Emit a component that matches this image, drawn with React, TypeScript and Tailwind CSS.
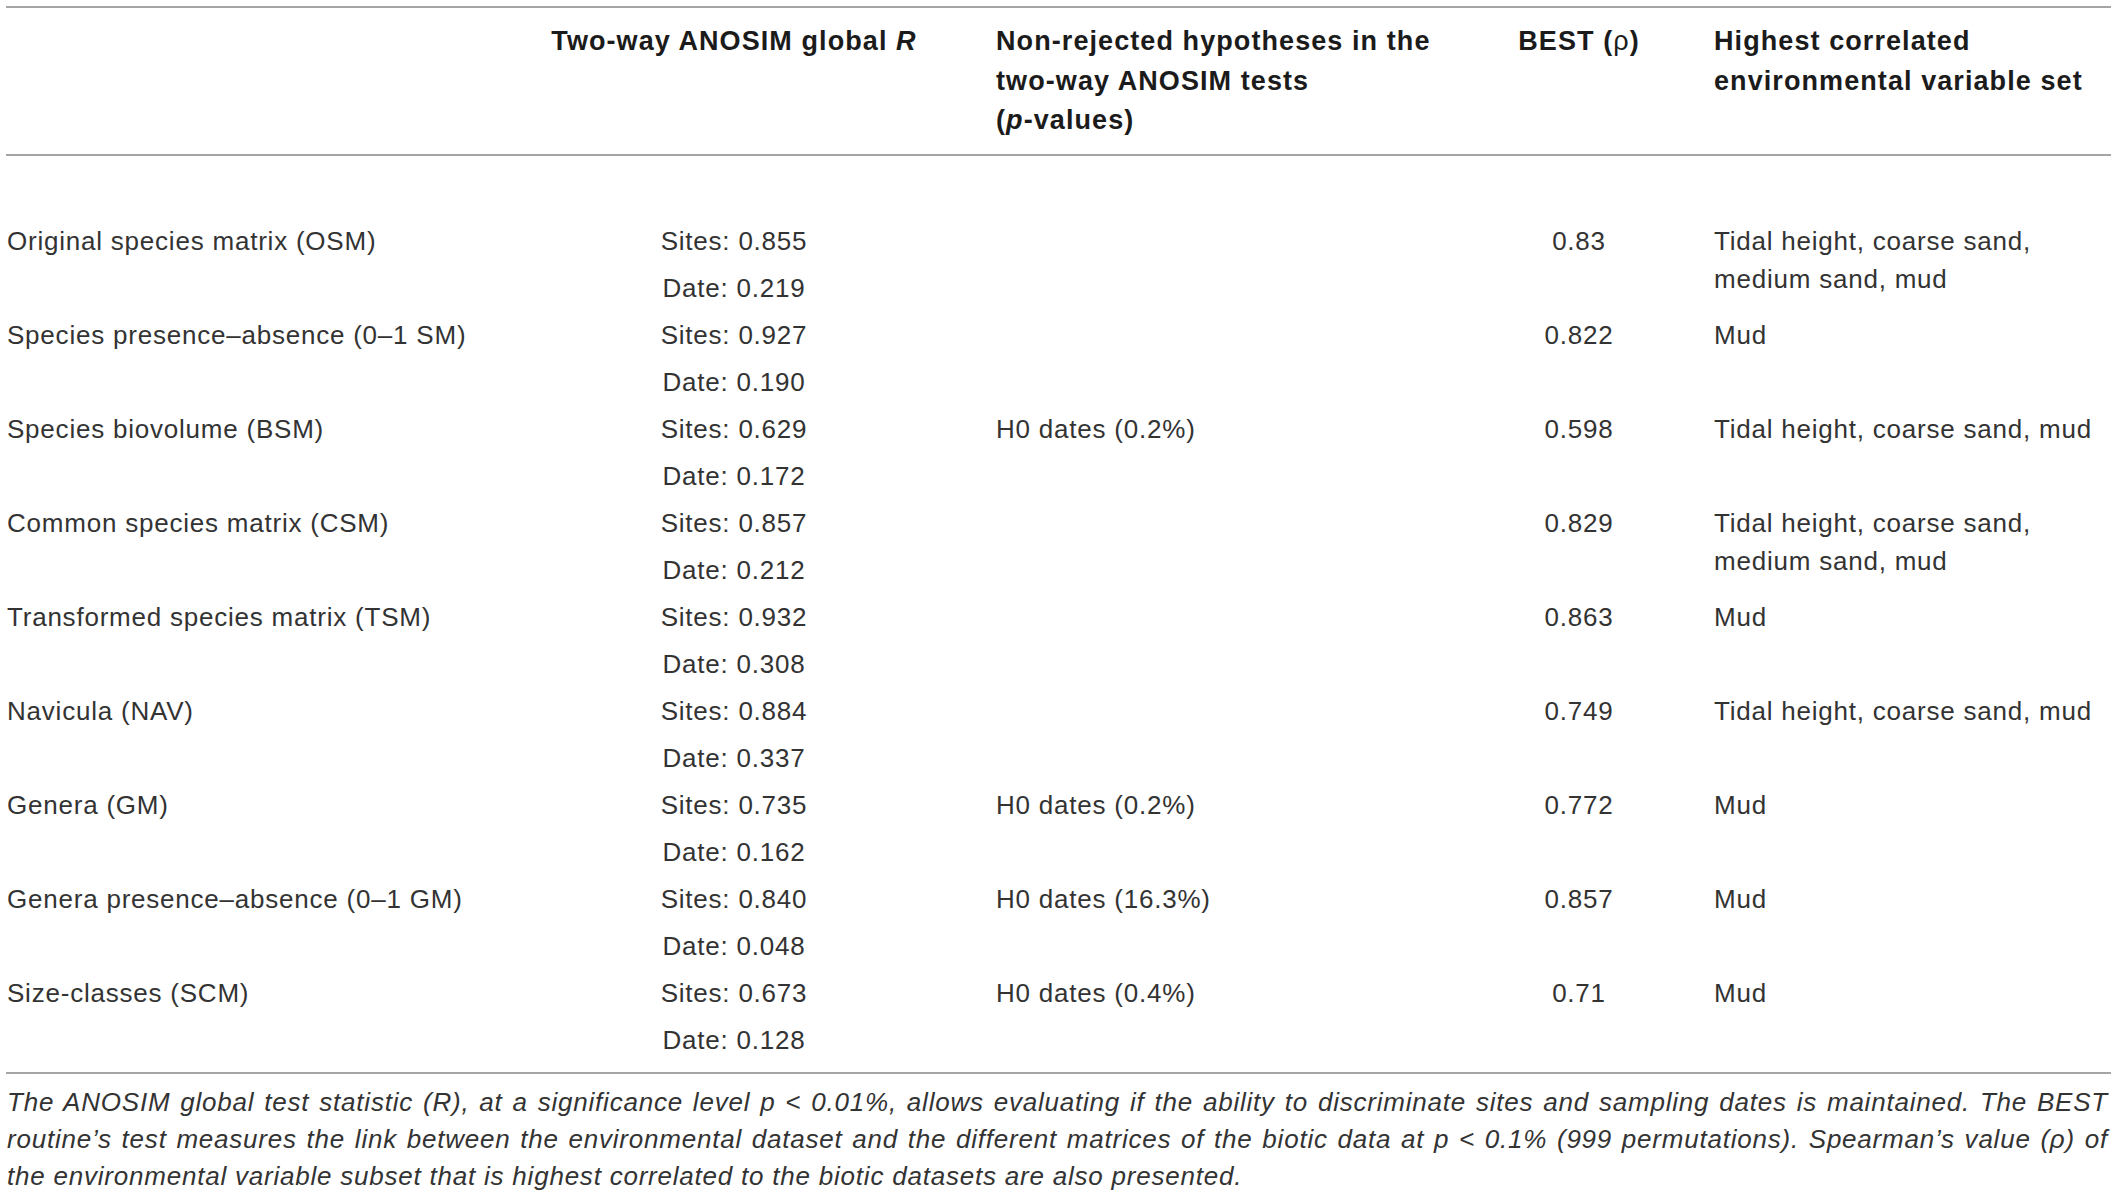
import React from "react";

type Row = {
  name: string;
  sites: string;
  date: string;
  h0?: string;
  best: string;
  env: string[];
};

const rows: Row[] = [
  { name: "Original species matrix (OSM)", sites: "0.855", date: "0.219", best: "0.83", env: ["Tidal height, coarse sand,", "medium sand, mud"] },
  { name: "Species presence–absence (0–1 SM)", sites: "0.927", date: "0.190", best: "0.822", env: ["Mud"] },
  { name: "Species biovolume (BSM)", sites: "0.629", date: "0.172", h0: "H0 dates (0.2%)", best: "0.598", env: ["Tidal height, coarse sand, mud"] },
  { name: "Common species matrix (CSM)", sites: "0.857", date: "0.212", best: "0.829", env: ["Tidal height, coarse sand,", "medium sand, mud"] },
  { name: "Transformed species matrix (TSM)", sites: "0.932", date: "0.308", best: "0.863", env: ["Mud"] },
  { name: "Navicula (NAV)", sites: "0.884", date: "0.337", best: "0.749", env: ["Tidal height, coarse sand, mud"] },
  { name: "Genera (GM)", sites: "0.735", date: "0.162", h0: "H0 dates (0.2%)", best: "0.772", env: ["Mud"] },
  { name: "Genera presence–absence (0–1 GM)", sites: "0.840", date: "0.048", h0: "H0 dates (16.3%)", best: "0.857", env: ["Mud"] },
  { name: "Size-classes (SCM)", sites: "0.673", date: "0.128", h0: "H0 dates (0.4%)", best: "0.71", env: ["Mud"] },
];

const cols = "grid grid-cols-[527px_400px_536px_218px_1fr]";

const Rule = () => <div className="ml-[6px] mr-[10px] h-[2px] bg-[#a5a5a5]" />;

export default function App() {
  return (
    <div className="min-h-screen bg-white pt-[6px] font-['Liberation_Sans',Arial,sans-serif] text-[#333]">
      <Rule />

      {/* header */}
      <div className={`${cols} pl-[7px] pt-[14px] pb-[13px] text-[27px] leading-[39.5px] font-bold tracking-[0.04em] text-[#1b1b1b] whitespace-nowrap`}>
        <div />
        <div className="text-center">
          Two-way ANOSIM global <i>R</i>
        </div>
        <div className="pl-[62px]">
          Non-rejected hypotheses in the
          <br />
          two-way ANOSIM tests
          <br />(<i>p</i>-values)
        </div>
        <div className="text-center">
          BEST (<span className="font-normal">ρ</span>)
        </div>
        <div className="pl-[26px]">
          Highest correlated
          <br />
          environmental variable set
        </div>
      </div>

      <Rule />

      {/* body */}
      <div className="pt-[62px] pb-[8px] text-[26px] tracking-[0.03em] whitespace-nowrap">
        {rows.map((r) => (
          <div key={r.name} className={`${cols} h-[94px] pl-[7px] leading-[47px]`}>
            <div>{r.name}</div>
            <div className="flex flex-col items-center">
              <span>Sites: {r.sites}</span>
              <span>Date: {r.date}</span>
            </div>
            <div className="pl-[62px]">{r.h0}</div>
            <div className="text-center">{r.best}</div>
            <div className="pl-[26px] pt-[4.4px] leading-[38px]">
              {r.env.map((e) => (
                <div key={e}>{e}</div>
              ))}
            </div>
          </div>
        ))}
      </div>

      <Rule />

      {/* footnote */}
      <div className="pl-[7px] pr-[13px] pt-[10px] text-[26px] italic leading-[37px] tracking-[0.03em] text-[#333]">
        <p className="text-justify [text-align-last:justify]">
          The ANOSIM global test statistic (R), at a significance level p &lt; 0.01%, allows evaluating if the ability to discriminate sites and sampling dates is maintained. The BEST
        </p>
        <p className="text-justify [text-align-last:justify]">
          routine’s test measures the link between the environmental dataset and the different matrices of the biotic data at p &lt; 0.1% (999 permutations). Spearman’s value (ρ) of
        </p>
        <p>the environmental variable subset that is highest correlated to the biotic datasets are also presented.</p>
      </div>
    </div>
  );
}
